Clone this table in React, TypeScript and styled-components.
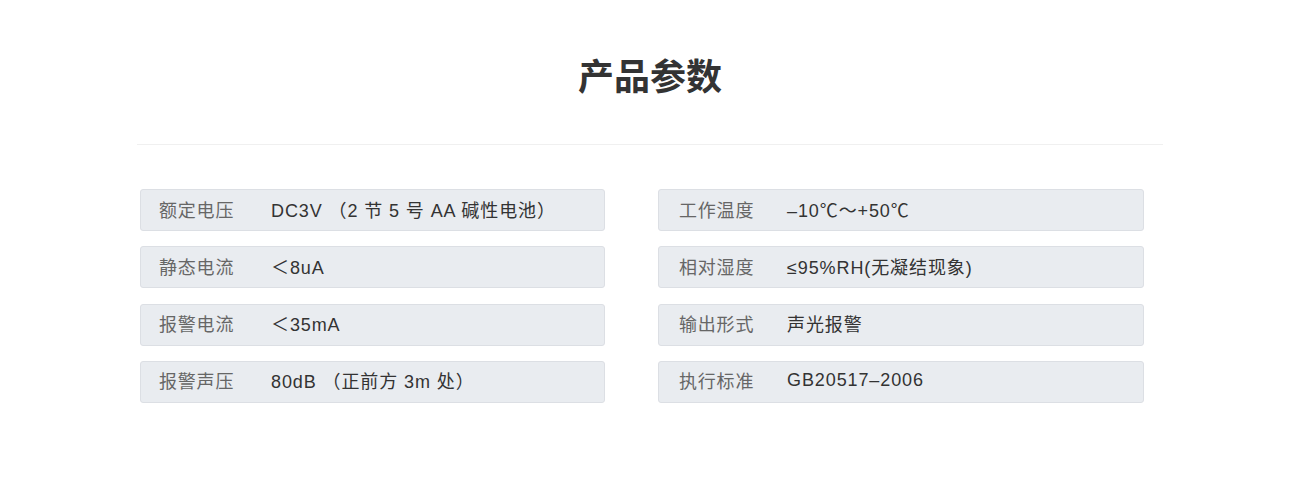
import React from 'react';
import styled, { createGlobalStyle } from 'styled-components';

interface Spec {
  label: string;
  value: string;
}

const leftSpecs: Spec[] = [
  { label: '额定电压', value: 'DC3V （2 节 5 号 AA 碱性电池）' },
  { label: '静态电流', value: '＜8uA' },
  { label: '报警电流', value: '＜35mA' },
  { label: '报警声压', value: '80dB （正前方 3m 处）' },
];

const rightSpecs: Spec[] = [
  { label: '工作温度', value: '–10℃～+50℃' },
  { label: '相对湿度', value: '≤95%RH(无凝结现象)' },
  { label: '输出形式', value: '声光报警' },
  { label: '执行标准', value: 'GB20517–2006' },
];

const GlobalStyle = createGlobalStyle`
  body {
    margin: 0;
    background: #fff;
    font-family: "Liberation Sans", "Noto Sans CJK SC", sans-serif;
  }
`;

const Section = styled.section`
  width: 1026px;
  margin: 0 auto;
  padding-top: 49px;
`;

const Title = styled.h2`
  margin: 0;
  height: 50px;
  line-height: 50px;
  text-align: center;
  font-family: "Noto Sans CJK SC", sans-serif;
  font-size: 36px;
  font-weight: 700;
  color: #333;
`;

const Divider = styled.hr`
  margin: 45px 0 0;
  border: none;
  height: 1px;
  background: #f0f0f0;
`;

const Columns = styled.div`
  display: grid;
  grid-template-columns: 465px 486px;
  column-gap: 53px;
  padding-left: 3px;
  margin-top: 44px;
`;

const List = styled.ul`
  list-style: none;
  margin: 0;
  padding: 0;
  display: flex;
  flex-direction: column;
  gap: 15.3px;
`;

const Item = styled.li<{ $pad: number }>`
  display: flex;
  align-items: center;
  height: 42px;
  box-sizing: border-box;
  padding-left: ${(p) => p.$pad}px;
  padding-bottom: 3px;
  background: #e9ecf0;
  border: 1px solid #dcdfe4;
  border-radius: 3px;
  font-size: 18px;
`;

const Label = styled.span<{ $width: number }>`
  width: ${(p) => p.$width}px;
  flex-shrink: 0;
  color: #666;
  font-family: "Noto Sans CJK SC", sans-serif;
  letter-spacing: 0.8px;
`;

const Value = styled.span`
  color: #333;
  white-space: pre;
  letter-spacing: 0.9px;
`;

const SpecList: React.FC<{ specs: Spec[]; pad: number; labelWidth: number }> = ({
  specs,
  pad,
  labelWidth,
}) => (
  <List>
    {specs.map((s) => (
      <Item key={s.label} $pad={pad}>
        <Label $width={labelWidth}>{s.label}</Label>
        <Value>{s.value}</Value>
      </Item>
    ))}
  </List>
);

const App: React.FC = () => (
  <>
    <GlobalStyle />
    <Section>
      <Title>产品参数</Title>
      <Divider />
      <Columns>
        <SpecList specs={leftSpecs} pad={18} labelWidth={112} />
        <SpecList specs={rightSpecs} pad={20} labelWidth={108} />
      </Columns>
    </Section>
  </>
);

export default App;
